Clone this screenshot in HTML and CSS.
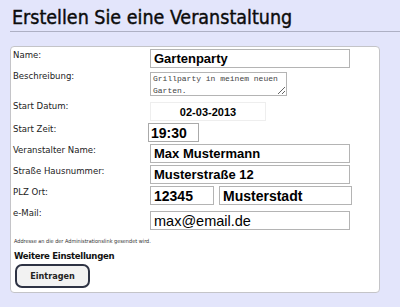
FILE: index.html
```html
<!DOCTYPE html>
<html lang="de">
<head>
<meta charset="utf-8">
<link rel="stylesheet" href="styles.css">
</head>
<body>
<h1 class="title">Erstellen Sie eine Veranstaltung</h1>
<form class="card">
  <div class="grid">
    <label class="lbl">Name:</label>
    <div class="field"><input class="inp wide" type="text" value="Gartenparty"></div>
    <label class="lbl">Beschreibung:</label>
    <div class="field"><textarea class="area">Grillparty in meinem neuen Garten.</textarea></div>
    <label class="lbl lbl-date">Start Datum:</label>
    <div class="field"><input class="inp date" type="text" value="02-03-2013"></div>
    <label class="lbl">Start Zeit:</label>
    <div class="field"><input class="inp time" type="text" value="19:30"></div>
    <label class="lbl">Veranstalter Name:</label>
    <div class="field"><input class="inp wide" type="text" value="Max Mustermann"></div>
    <label class="lbl">Straße Hausnummer:</label>
    <div class="field"><input class="inp wide" type="text" value="Musterstraße 12"></div>
    <label class="lbl">PLZ Ort:</label>
    <div class="field pair"><input class="inp plz" type="text" value="12345"><input class="inp ort" type="text" value="Musterstadt"></div>
    <label class="lbl lbl-mail">e-Mail:</label>
    <div class="field mail"><input class="inp wide" type="text" value="max@email.de"></div>
  </div>
  <p class="note">Addresse an die der Administrationslink gesendet wird.</p>
  <h2 class="more">Weitere Einstellungen</h2>
  <button class="btn" type="button">Eintragen</button>
</form>
</body>
</html>
```
FILE: styles.css
```css
html, body {
  margin: 0;
  padding: 0;
}
body {
  background: #e3e5fb;
  width: 400px;
  height: 307px;
  overflow: hidden;
  font-family: "DejaVu Sans Condensed", "DejaVu Sans", Verdana, sans-serif;
  color: #111;
}
.title {
  margin: 0 0 0 10px;
  padding: 7px 0 2px 2px;
  font-family: "DejaVu Sans Condensed", "DejaVu Sans", Verdana, sans-serif;
  font-weight: normal;
  font-size: 19.5px;
  line-height: 22px;
  color: #0c0c0c;
  -webkit-text-stroke: 0.4px #0c0c0c;
  border-bottom: 1px solid #aeb0c4;
}
.card {
  margin: 14px 0 0 10px;
  width: 370px;
  height: 247px;
  background: #fff;
  border: 1px solid #c4c4c8;
  border-radius: 4px;
  padding: 2px 0 0 2px;
  box-sizing: border-box;
  display: flex;
  flex-direction: column;
}
.grid {
  display: grid;
  grid-template-columns: 137px 1fr;
  row-gap: 2px;
  align-items: start;
}
.lbl {
  font-size: 9.5px;
  line-height: 12px;
  color: #222;
}
.lbl-date { padding-top: 2px; }
.field {
  display: flex;
}
.inp {
  font-family: "Liberation Sans", Arial, sans-serif;
  font-weight: bold;
  font-size: 13px;
  color: #000;
  height: 19px;
  box-sizing: border-box;
  border: 1px solid #b4b4b4;
  padding: 0 3px;
  margin: 0;
  background: #fff;
  outline: none;
}
.wide { width: 200px; }
.area {
  width: 137px;
  height: 24px;
  box-sizing: border-box;
  font-family: "Liberation Mono", "Courier New", monospace;
  font-size: 8px;
  line-height: 12px;
  color: #444;
  border: 1px solid #b4b4b4;
  padding: 0 2px;
  margin: 2px 0 0;
  resize: both;
  overflow: hidden;
}
.date {
  width: 116px;
  margin-top: 4px;
  font-size: 11px;
  text-align: center;
  border-color: #eee;
}
.time {
  width: 51px;
  margin-left: -2px;
  border-color: #aaa;
  font-size: 14px;
  padding-left: 2px;
}
.pair { gap: 5px; }
.plz { width: 64px; font-size: 14px; }
.ort { width: 133px; font-size: 14px; }
.mail { margin-top: 4px; }
.mail .inp { font-size: 14.5px; font-weight: normal; }
.note {
  margin: 8px 0 0 1px;
  font-size: 5.5px;
  color: #333;
}
.more {
  margin: 6px 0 0 1px;
  font-size: 9.5px;
  letter-spacing: -0.3px;
  font-weight: bold;
  color: #111;
}
.btn {
  margin: 3px 0 0 2px;
  width: 75px;
  height: 24px;
  border: 2px solid #2e3344;
  border-radius: 7px;
  background: #f2f2f2;
  font-family: "DejaVu Sans Condensed", "DejaVu Sans", Verdana, sans-serif;
  font-weight: bold;
  font-size: 9px;
  color: #222;
  padding: 0;
}
```
